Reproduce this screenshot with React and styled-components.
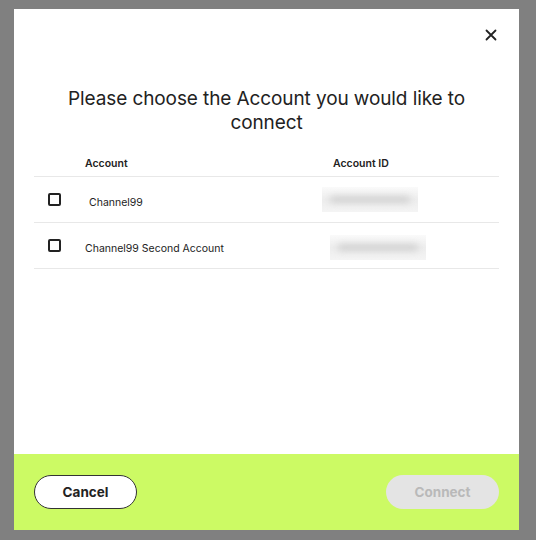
import React from "react";
import styled, { createGlobalStyle } from "styled-components";

const GlobalStyle = createGlobalStyle`
  html, body {
    margin: 0;
    padding: 0;
    background: #808080;
    font-family: Inter, "Liberation Sans", Arial, sans-serif;
    color: #222;
  }
`;

const accounts = [
  { name: "Channel99", indent: 4, idOffset: -11, idTop: -1 },
  { name: "Channel99 Second Account", indent: 0, idOffset: -3, idTop: 3 },
];

function App() {
  return (
    <>
      <GlobalStyle />
      <Page>
        <Modal>
          <Body>
            <CloseRow>
              <CloseButton aria-label="Close">
                <svg width="12" height="12" viewBox="0 0 12 12">
                  <path d="M1.5 1.5L10.5 10.5M10.5 1.5L1.5 10.5" stroke="#222" strokeWidth="1.8" strokeLinecap="round" />
                </svg>
              </CloseButton>
            </CloseRow>
            <Title>Please choose the Account you would like to connect</Title>
            <Table>
              <HeadRow>
                <span />
                <HeadCell>Account</HeadCell>
                <HeadCell>Account ID</HeadCell>
              </HeadRow>
              {accounts.map((a) => (
                <Row key={a.name}>
                  <Checkbox />
                  <NameCell $indent={a.indent}>{a.name}</NameCell>
                  <IdCell>
                    <Blur style={{ marginLeft: a.idOffset, marginTop: a.idTop }}>
                      <BlurText />
                    </Blur>
                  </IdCell>
                </Row>
              ))}
            </Table>
          </Body>
          <Footer>
            <CancelButton>Cancel</CancelButton>
            <ConnectButton disabled>Connect</ConnectButton>
          </Footer>
        </Modal>
      </Page>
    </>
  );
}

export default App;

const Page = styled.div`
  padding: 9px 0 0 14px;
  height: 540px;
  box-sizing: border-box;
`;
const Modal = styled.div`
  width: 505px;
  height: 521px;
  background: #fff;
  display: flex;
  flex-direction: column;
`;
const Body = styled.div`
  flex: 1;
  padding: 18px 20px 0 20px;
`;
const CloseRow = styled.div`
  display: flex;
  justify-content: flex-end;
`;
const CloseButton = styled.button`
  border: none;
  background: none;
  padding: 0;
  width: 16px;
  height: 16px;
  display: flex;
  align-items: center;
  justify-content: center;
  cursor: pointer;
`;
const Title = styled.h2`
  margin: 44px 10px 0;
  text-align: center;
  font-size: 19px;
  font-weight: 400;
  letter-spacing: -0.1px;
  line-height: 24px;
  color: #222;
`;
const Table = styled.div`
  margin-top: 14px;
`;
const HeadRow = styled.div`
  display: grid;
  grid-template-columns: 51px 248px 1fr;
  height: 27px;
  align-items: center;
  border-bottom: 1px solid #e8e8e8;
`;
const HeadCell = styled.span`
  font-size: 10.5px;
  font-weight: 600;
  color: #222;
  padding-top: 2px;
`;
const Row = styled.div`
  display: grid;
  grid-template-columns: 51px 248px 1fr;
  height: 45px;
  align-items: center;
  border-bottom: 1px solid #e8e8e8;
`;
const Checkbox = styled.span`
  width: 9px;
  height: 9px;
  margin-left: 14px;
  margin-top: -1px;
  border: 2px solid #222;
  border-radius: 2px;
`;
const NameCell = styled.span`
  font-size: 10.5px;
  color: #222;
  margin-top: 5px;
  padding-left: ${(p) => p.$indent}px;
`;
const IdCell = styled.div`
  display: flex;
  align-items: center;
`;
const Blur = styled.div`
  width: 96px;
  height: 25px;
  background: linear-gradient(#fafafa, #ededed 50%, #f4f4f4);
  display: flex;
  align-items: center;
  justify-content: center;
  overflow: hidden;
`;
const BlurText = styled.div`
  width: 80px;
  height: 7px;
  background: #d2d2d2;
  border-radius: 3px;
  filter: blur(3px);
`;
const Footer = styled.div`
  height: 76px;
  background: #ccfa64;
  display: flex;
  align-items: center;
  justify-content: space-between;
  padding: 0 20px;
`;
const PillButton = styled.button`
  height: 34px;
  border-radius: 17px;
  font-family: Inter, "Liberation Sans", Arial, sans-serif;
  font-size: 13.5px;
  font-weight: 700;
  cursor: pointer;
`;
const CancelButton = styled(PillButton)`
  width: 103px;
  background: #fff;
  border: 1px solid #333;
  color: #222;
`;
const ConnectButton = styled(PillButton)`
  width: 113px;
  background: #e4e4e4;
  border: none;
  color: #b9b9b9;
  cursor: default;
`;
